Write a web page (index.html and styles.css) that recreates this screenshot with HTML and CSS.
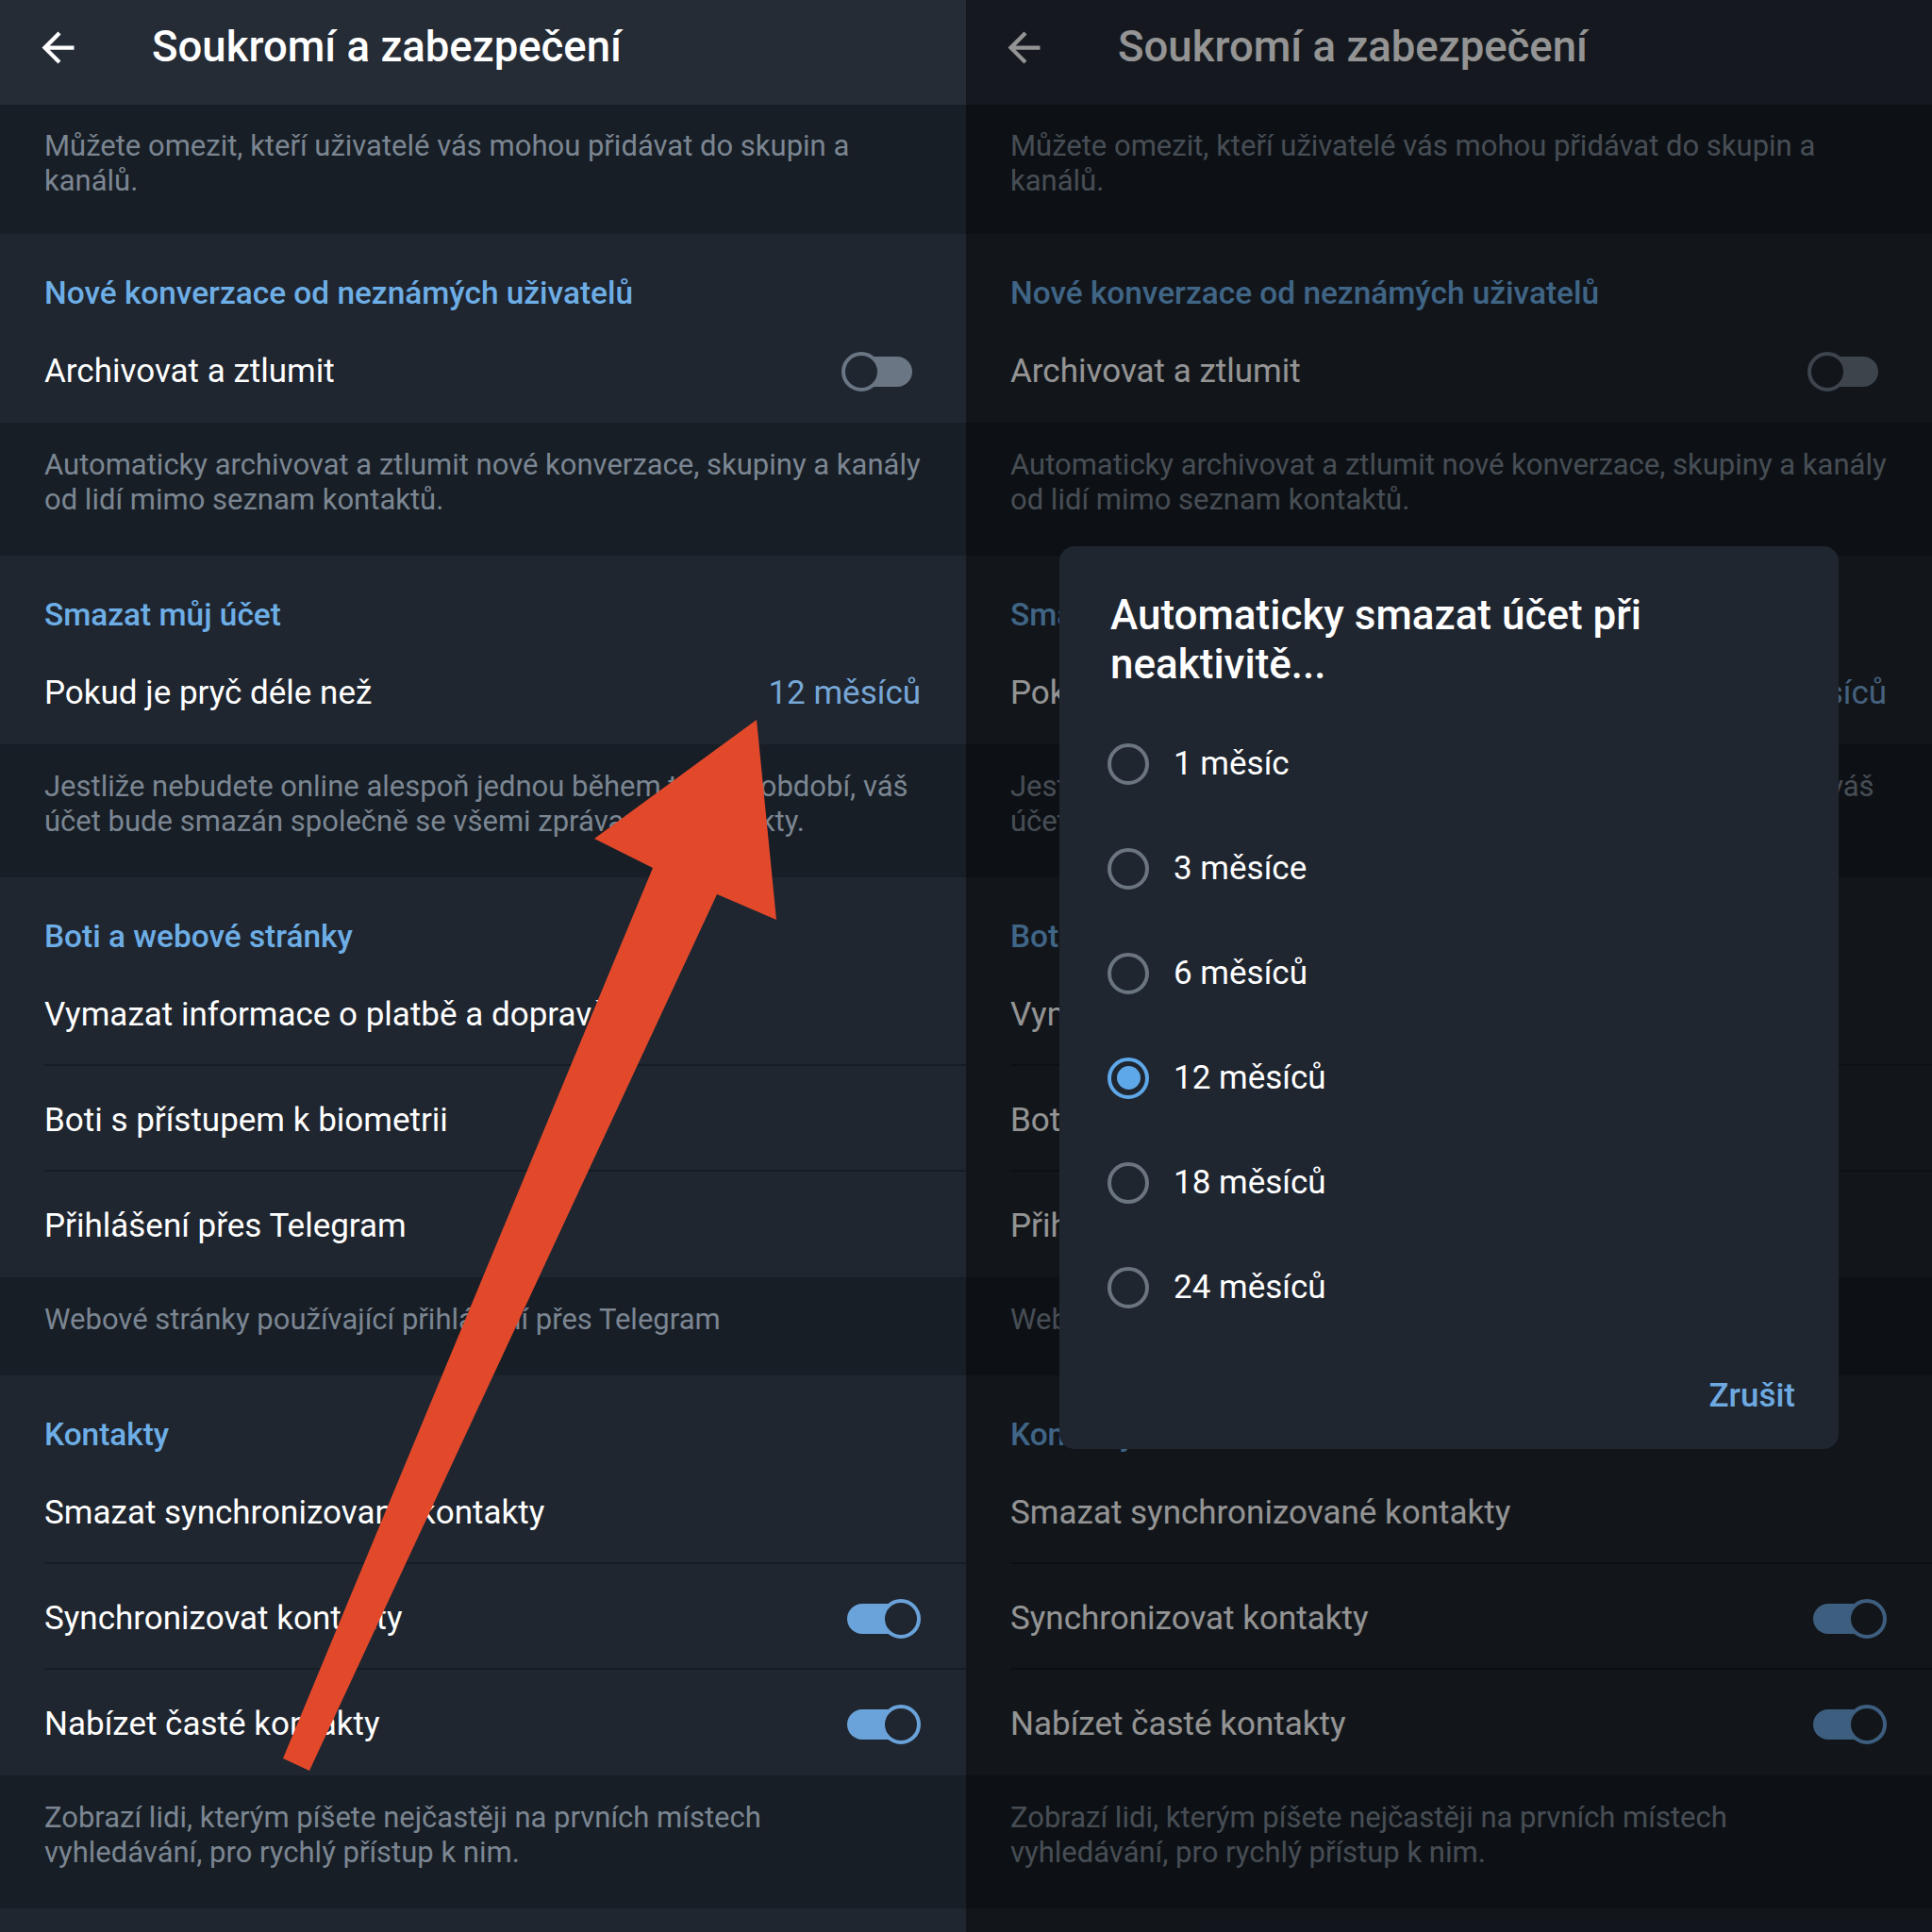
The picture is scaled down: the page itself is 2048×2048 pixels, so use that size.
FILE: index.html
```html
<!DOCTYPE html>
<html lang="cs">
<head>
<meta charset="utf-8">
<title>Soukromí a zabezpečení</title>
<link rel="stylesheet" href="styles.css">
</head>
<body>
<div class="stage">

  <section class="panel">
    <header class="appbar">
      <svg class="back" viewBox="0 0 24 24"><path d="M20 11H7.83l5.59-5.59L12 4l-8 8 8 8 1.41-1.41L7.83 13H20v-2z"/></svg>
      <h1 class="title">Soukromí a zabezpečení</h1>
    </header>
    <div class="info first">Můžete omezit, kteří uživatelé vás mohou přidávat do skupin a<br>kanálů.</div>
    <div class="group">
      <div class="group-title">Nové konverzace od neznámých uživatelů</div>
      <div class="row"><span>Archivovat a ztlumit</span>
        <svg class="toggle off" viewBox="0 0 78 44"><rect x="12" y="6" width="63" height="32" rx="16"/><circle cx="21" cy="22" r="19"/></svg>
      </div>
    </div>
    <div class="info">Automaticky archivovat a ztlumit nové konverzace, skupiny a kanály<br>od lidí mimo seznam kontaktů.</div>
    <div class="group">
      <div class="group-title">Smazat můj účet</div>
      <div class="row"><span>Pokud je pryč déle než</span><span class="value">12 měsíců</span></div>
    </div>
    <div class="info">Jestliže nebudete online alespoň jednou během tohoto období, váš<br>účet bude smazán společně se všemi zprávami a kontakty.</div>
    <div class="group">
      <div class="group-title">Boti a webové stránky</div>
      <div class="row divided"><span>Vymazat informace o platbě a dopravě</span></div>
      <div class="row divided"><span>Boti s přístupem k biometrii</span></div>
      <div class="row"><span>Přihlášení přes Telegram</span></div>
    </div>
    <div class="info single">Webové stránky používající přihlášení přes Telegram</div>
    <div class="group">
      <div class="group-title">Kontakty</div>
      <div class="row divided"><span>Smazat synchronizované kontakty</span></div>
      <div class="row divided"><span>Synchronizovat kontakty</span>
        <svg class="toggle on" viewBox="0 0 78 44"><rect x="0" y="6" width="60" height="32" rx="16"/><circle cx="57" cy="22" r="19"/></svg>
      </div>
      <div class="row"><span>Nabízet časté kontakty</span>
        <svg class="toggle on" viewBox="0 0 78 44"><rect x="0" y="6" width="60" height="32" rx="16"/><circle cx="57" cy="22" r="19"/></svg>
      </div>
    </div>
    <div class="info">Zobrazí lidi, kterým píšete nejčastěji na prvních místech<br>vyhledávání, pro rychlý přístup k nim.</div>
    <div class="tail"></div>
  </section>

  <section class="panel">
    <header class="appbar">
      <svg class="back" viewBox="0 0 24 24"><path d="M20 11H7.83l5.59-5.59L12 4l-8 8 8 8 1.41-1.41L7.83 13H20v-2z"/></svg>
      <h1 class="title">Soukromí a zabezpečení</h1>
    </header>
    <div class="info first">Můžete omezit, kteří uživatelé vás mohou přidávat do skupin a<br>kanálů.</div>
    <div class="group">
      <div class="group-title">Nové konverzace od neznámých uživatelů</div>
      <div class="row"><span>Archivovat a ztlumit</span>
        <svg class="toggle off" viewBox="0 0 78 44"><rect x="12" y="6" width="63" height="32" rx="16"/><circle cx="21" cy="22" r="19"/></svg>
      </div>
    </div>
    <div class="info">Automaticky archivovat a ztlumit nové konverzace, skupiny a kanály<br>od lidí mimo seznam kontaktů.</div>
    <div class="group">
      <div class="group-title">Smazat můj účet</div>
      <div class="row"><span>Pokud je pryč déle než</span><span class="value">12 měsíců</span></div>
    </div>
    <div class="info">Jestliže nebudete online alespoň jednou během tohoto období, váš<br>účet bude smazán společně se všemi zprávami a kontakty.</div>
    <div class="group">
      <div class="group-title">Boti a webové stránky</div>
      <div class="row divided"><span>Vymazat informace o platbě a dopravě</span></div>
      <div class="row divided"><span>Boti s přístupem k biometrii</span></div>
      <div class="row"><span>Přihlášení přes Telegram</span></div>
    </div>
    <div class="info single">Webové stránky používající přihlášení přes Telegram</div>
    <div class="group">
      <div class="group-title">Kontakty</div>
      <div class="row divided"><span>Smazat synchronizované kontakty</span></div>
      <div class="row divided"><span>Synchronizovat kontakty</span>
        <svg class="toggle on" viewBox="0 0 78 44"><rect x="0" y="6" width="60" height="32" rx="16"/><circle cx="57" cy="22" r="19"/></svg>
      </div>
      <div class="row"><span>Nabízet časté kontakty</span>
        <svg class="toggle on" viewBox="0 0 78 44"><rect x="0" y="6" width="60" height="32" rx="16"/><circle cx="57" cy="22" r="19"/></svg>
      </div>
    </div>
    <div class="info">Zobrazí lidi, kterým píšete nejčastěji na prvních místech<br>vyhledávání, pro rychlý přístup k nim.</div>
    <div class="tail"></div>

    <div class="scrim"></div>
    <div class="dialog">
      <div class="dlg-title">Automaticky smazat účet při<br>neaktivitě...</div>
      <div class="options">
        <div class="option"><span class="radio"></span><span>1 měsíc</span></div>
        <div class="option"><span class="radio"></span><span>3 měsíce</span></div>
        <div class="option"><span class="radio"></span><span>6 měsíců</span></div>
        <div class="option"><span class="radio checked"></span><span>12 měsíců</span></div>
        <div class="option"><span class="radio"></span><span>18 měsíců</span></div>
        <div class="option"><span class="radio"></span><span>24 měsíců</span></div>
      </div>
      <div class="dlg-actions"><span class="btn">Zrušit</span></div>
    </div>
  </section>

  <svg class="annotation" viewBox="0 0 2048 2048">
    <polygon points="802,763 823,975 760,948 328,1877 300,1864 692,920 630,889"/>
  </svg>
</div>
</body>
</html>
```
FILE: styles.css
```css
html, body {
  margin: 0;
  padding: 0;
}
body {
  background: #181e26;
  font-family: Roboto, "Noto Sans", "Liberation Sans", sans-serif;
  color: #ffffff;
}
.stage {
  position: relative;
  width: 2048px;
  height: 2048px;
  display: grid;
  grid-template-columns: 1024px 1024px;
  overflow: hidden;
}
.panel {
  position: relative;
  height: 2048px;
  display: flex;
  flex-direction: column;
  background: #1f2630;
  overflow: hidden;
}
.appbar {
  flex: none;
  height: 111px;
  box-sizing: border-box;
  padding: 0 0 11px 36px;
  display: flex;
  align-items: center;
  background: #252c36;
}
.back {
  width: 51px;
  height: 51px;
  flex: none;
  fill: #ffffff;
}
.title {
  margin: 0 0 0 74px;
  font-size: 45.5px;
  line-height: 52px;
  font-weight: 500;
  color: #ffffff;
}
.info {
  flex: none;
  background: #181e26;
  color: #7b8692;
  font-size: 31px;
  line-height: 36.5px;
  padding: 27px 47px 41px;
  white-space: nowrap;
}
.info.first {
  padding-top: 26px;
  padding-bottom: 38px;
}
.info.single {
  padding-bottom: 40.5px;
}
.group {
  flex: none;
  background: #1f2630;
}
.group-title {
  height: 88px;
  box-sizing: border-box;
  padding: 42px 47px 0;
  font-size: 33.4px;
  line-height: 42px;
  font-weight: 500;
  color: #6eaee6;
}
.row {
  position: relative;
  height: 112px;
  box-sizing: border-box;
  padding: 4px 48px 0 47px;
  display: flex;
  align-items: center;
  justify-content: space-between;
  font-size: 35px;
  line-height: 42px;
  color: #ffffff;
}
.row.divided::after {
  content: "";
  position: absolute;
  left: 47px;
  right: 0;
  bottom: 0;
  height: 2px;
  background: #161c23;
}
.value {
  color: #77a7d6;
}
.toggle {
  width: 78px;
  height: 44px;
  flex: none;
}
.toggle circle {
  fill: #1f2630;
  stroke-width: 4;
}
.toggle.off {
  margin-right: 6px;
}
.toggle.off rect {
  fill: #6a7683;
}
.toggle.off circle {
  stroke: #6a7683;
}
.toggle.on rect {
  fill: #6aa2da;
}
.toggle.on circle {
  stroke: #6aa2da;
}
.tail {
  flex: 1;
  background: #1f2630;
}
.scrim {
  position: absolute;
  inset: 0;
  background: rgba(0, 0, 0, 0.42);
}
.dialog {
  position: absolute;
  left: 99px;
  top: 579px;
  width: 826px;
  height: 957px;
  box-sizing: border-box;
  padding: 47px 46px 35px 51px;
  background: #1f2630;
  border-radius: 16px;
  display: flex;
  flex-direction: column;
}
.dlg-title {
  margin-left: 3px;
  font-size: 44px;
  line-height: 52px;
  font-weight: 500;
  color: #ffffff;
}
.options {
  margin-top: 24px;
  display: flex;
  flex-direction: column;
}
.option {
  height: 111px;
  display: flex;
  align-items: center;
  gap: 26px;
  font-size: 35px;
  line-height: 42px;
  color: #ffffff;
}
.radio {
  position: relative;
  width: 44px;
  height: 44px;
  box-sizing: border-box;
  border: 4px solid #6b7580;
  border-radius: 50%;
  flex: none;
}
.radio.checked {
  border: 4.5px solid #5ea7e8;
}
.radio.checked::after {
  content: "";
  position: absolute;
  left: 50%;
  top: 50%;
  width: 25px;
  height: 25px;
  margin: -12.5px 0 0 -12.5px;
  border-radius: 50%;
  background: #5ea7e8;
}
.dlg-actions {
  margin-top: auto;
  display: flex;
  justify-content: flex-end;
}
.btn {
  font-size: 35px;
  line-height: 42px;
  font-weight: 500;
  color: #6ea9e0;
}
.annotation {
  position: absolute;
  left: 0;
  top: 0;
  width: 2048px;
  height: 2048px;
  pointer-events: none;
}
.annotation polygon {
  fill: #e2492b;
}
```
